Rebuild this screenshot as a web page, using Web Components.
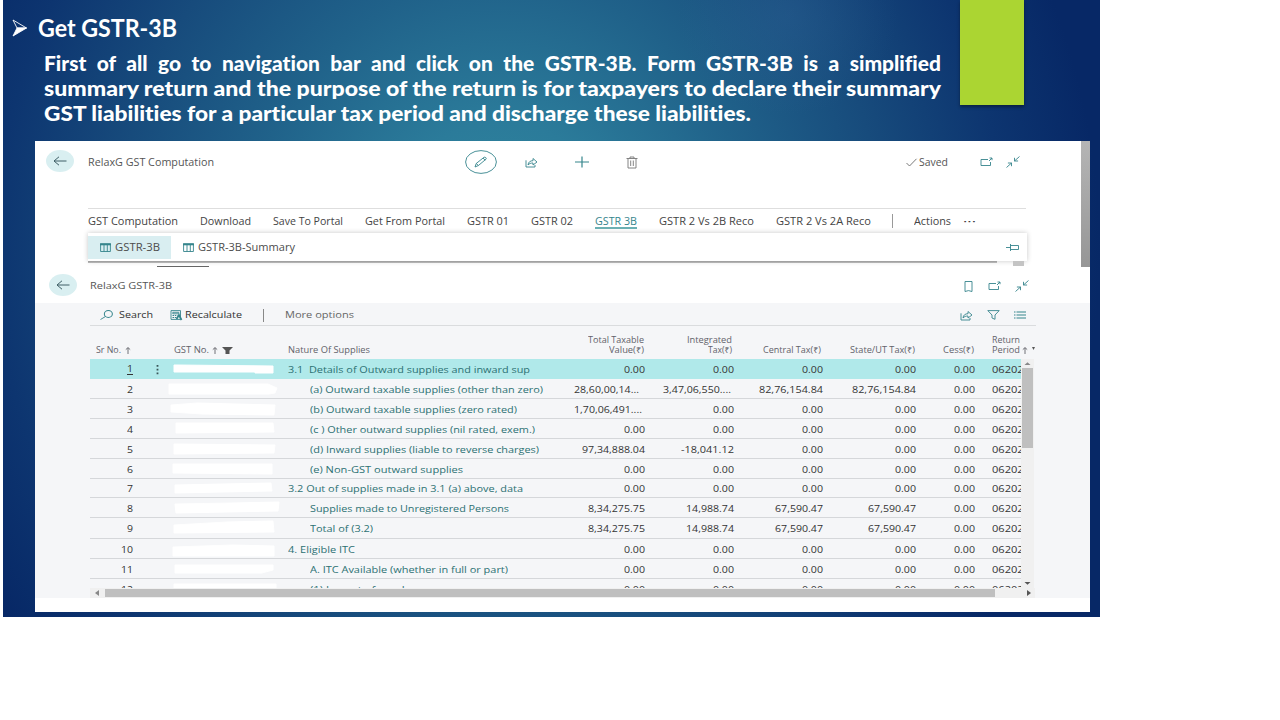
<!DOCTYPE html>
<html lang="en">
<head>
<meta charset="utf-8">
<title>Get GSTR-3B</title>
<style>
  body { margin: 0; background: #fff; font-family: "Open Sans", "Noto Sans", sans-serif; }
</style>
</head>
<body>
<help-slide>
  <slide-header slot="header"></slide-header>
  <computation-page></computation-page>
  <gstr-page></gstr-page>
</help-slide>

<script>
(function () {
  // Registers an element whose shadow root is cloned from the given markup
  function define(name, html, setup) {
    const template = document.createElement('template');
    template.innerHTML = html;
    window.customElements.define(name, class extends HTMLElement {
      constructor() {
        super();
        this.attachShadow({ mode: 'open' });
        this.shadowRoot.appendChild(template.content.cloneNode(true));
      }
      connectedCallback() {
        if (setup) setup(this, this.shadowRoot);
      }
    });
  }

  // <fit-text w="90">label</fit-text> stretches its label to w pixels
  define('fit-text', `
    <style>
      :host { display: inline-block; text-align: left; vertical-align: top; }
      span { display: block; width: max-content; white-space: pre; transform-origin: 0 50%; }
    </style>
    <span><slot></slot></span>
  `, (el, root) => {
    const w = Number(el.getAttribute('w'));
    const span = root.querySelector('span');
    el.style.width = w + 'px';
    span.style.transform = 'scaleX(' + w / span.getBoundingClientRect().width + ')';
  });

  const ICONS = {
    back: [28, 22, '<ellipse cx="14" cy="11" rx="14" ry="11" fill="#d9eff1" stroke="none"/><path stroke="#3f5f66" stroke-width="1" d="M20.5 11H8M13 6.8 8 11l5 4.2"/>'],
    edit: [32, 24, '<ellipse cx="16" cy="12" rx="15.4" ry="11.4"/><path d="M10 17l1.2-3.5L19 7.3c1-.7 3 .8 2 1.9l-7.6 6.3zM11.2 13.5l2.2 2M18 8.1l2.2 2"/>'],
    share: [13, 11, '<path d="M1 3.3V10h9V8M3 8c.3-3 2.3-4.3 5-4.3V1.5L12 5 8 8V6C5.8 6 4.2 6.6 3 8z"/>'],
    plus: [14, 12, '<path stroke-width="1.2" d="M0 6h14M7 .5v11"/>'],
    trash: [12, 13, '<path stroke="#777" d="M.5 2.5h11M4 2.5V1h4v1.5M2 2.5v9.5h8V2.5M4.7 4.5v5.5M7.3 4.5v5.5"/>'],
    check: [11, 9, '<path stroke="#6b6b6b" d="M.5 5l3 3L10.5.8"/>'],
    popout: [13, 10, '<path d="M8 2.5H1v6h9.5V5M9 4L12 1M9.5 1H12v2.2"/>'],
    collapse: [14, 12, '<path d="M13.5.5L8.5 5M8.5 1.8V5h3.6M.5 11.5L5.5 7M1.9 7h3.6v3.2"/>'],
    bookmark: [9, 11, '<path d="M1 .5h7v10L4.5 9.6 1 10.5z"/>'],
    table: [11, 9, '<path d="M.6 1h9.8v7.5H.6zM4 2v6.5M7.3 2v6.5"/><path stroke-width="2" d="M0 1.3h11"/>'],
    pin: [13, 9, '<path d="M0 4.5h4.5M4.5 1v7M4.5 2.5h8v4h-8"/>'],
    search: [13, 10, '<circle cx="8.3" cy="4" r="3.5" transform="matrix(1.15 0 0 1 -1.2 0)"/><path d="M5.5 6.5L.5 9.5"/>'],
    recalc: [12, 10, '<path d="M1 .6h9.5v8.8H1zM2.8 2.3h6v1.5h-6z"/><path stroke-width="1.2" stroke-dasharray="1.5 .8" d="M2.5 5.5h5M2.5 7.5h4"/><path stroke-width="1.8" d="M6.5 9l2.5-4 2.5 5"/>'],
    filter: [13, 10, '<path d="M.8.6h11.4L8 5v4.3L5 8V5z"/>'],
    filled: [11, 7, '<path fill="#555" stroke="none" d="M0 0h11L7.5 3.5V7h-4V3.5z"/>'],
    list: [12, 8, '<path stroke-width="1.2" d="M0 1h1.5M2.5 1h9.5M0 4h1.5M2.5 4h9.5M0 7h1.5M2.5 7h9.5"/>'],
    sort: [6, 7, '<path stroke="#62626a" d="M3 7V.8M.8 2.6L3 .6l2.2 2"/>'],
    more: [3, 11, '<path fill="#3a5558" stroke="none" d="M.6 1h1.8v1.8H.6zM.6 4.8h1.8v1.8H.6zM.6 8.5h1.8v1.8H.6z"/>'],
    bullet: [16, 18, '<path stroke="#fff" d="M1 1l13.5 8L5 9z"/><path fill="#fff" stroke="#fff" d="M14.5 9L1 17 5 9z"/>']
  };

  define('ui-icon', `
    <style>
      :host { display: inline-flex; }
      svg { display: block; fill: none; stroke: #35858c; stroke-width: .9; overflow: visible; }
    </style>
  `, (el, root) => {
    const [w, h, shapes] = ICONS[el.getAttribute('name')];
    root.innerHTML += `<svg width="${w}" height="${h}" viewBox="0 0 ${w} ${h}">${shapes}</svg>`;
  });

  define('help-slide', `
    <style>
      :host {
        display: flex; flex-direction: column; box-sizing: border-box;
        width: 1097px; height: 617px; margin-left: 3px; padding-right: 10px;
        background:
          radial-gradient(110px 100px at 785px 15px, rgba(50, 100, 155, .3), transparent),
          radial-gradient(600px 640px at 497px 250px, #31899f 0, #2b7b9a 20%, #20628a 42%, #174b7c 64%, #0d3570 84%, #072866 100%);
      }
      main { width: 1055px; height: 471px; margin-left: 32px; background: #fff; }
    </style>
    <slot name="header"></slot>
    <main><slot></slot></main>
  `);

  define('slide-header', `
    <style>
      :host { display: flex; height: 141px; flex: none; color: #fff; font-family: "Lato", sans-serif; font-weight: 900; font-variant-ligatures: none; }
      .copy { width: 957px; }
      h1 { display: flex; align-items: center; gap: 10px; margin: 13px 0 0 9px; font-size: 24px; line-height: 29px; }
      p { display: flex; flex-direction: column; margin: 8px 0 0 41px; font-size: 21px; line-height: 25px; }
      .tab { width: 64px; height: 105px; background: #abd532; box-shadow: 0 2px 3px rgba(0, 0, 0, .4); }
    </style>
    <div class="copy">
      <h1><ui-icon name="bullet"></ui-icon><fit-text w="139">Get GSTR-3B</fit-text></h1>
      <p>
        <fit-text w="897" style="word-spacing:5.5px">First of all go to navigation bar and click on the GSTR-3B. Form GSTR-3B is a simplified</fit-text>
        <fit-text w="897">summary return and the purpose of the return is for taxpayers to declare their summary</fit-text>
        <fit-text w="707">GST liabilities for a particular tax period and discharge these liabilities.</fit-text>
      </p>
    </div>
    <div class="tab"></div>
  `);

  define('computation-page', `
    <style>
      :host { display: flex; justify-content: space-between; height: 126px; font-size: 10px; line-height: 14px; color: #555; }
      .page { width: 1000px; }
      .title { display: grid; grid-template-columns: 11px 42px 377px 60px 50px 51px 280px 74px 26px auto; align-items: center; height: 42px; }
      .title > :first-child { grid-column: 2; margin-top: -2px; }
      .saved { display: flex; align-items: center; gap: 2px; }
      nav {
        display: grid; grid-template-columns: 112px 73px 92px 102px 64px 64px 64px 117px 116px 22px 49px auto;
        align-items: center; width: 938px; height: 24px; margin: 25px 0 0 53px; border-top: 1px solid #dedede; color: #444;
      }
      nav .on { color: #35858c; box-shadow: 0 1px #6bb0b3, 0 2px #6bb0b3; height: 12px; line-height: 12px; }
      .sep { width: 1px; height: 14px; background: #999; }
      .menu {
        display: flex; align-items: center; box-sizing: border-box; width: 939px; height: 28px; margin-left: 53px;
        padding-right: 8px; color: #4c4c4c; box-shadow: 0 0 5px rgba(0, 0, 0, .22);
      }
      .item { display: flex; align-items: center; gap: 4px; height: 23px; padding: 0 11px 0 12px; }
      .item.on { background: #d9eef1; }
      .menu > ui-icon { margin-left: auto; }
      .under { display: flex; justify-content: space-between; align-items: flex-start; width: 936px; height: 5px; margin-left: 53px; }
      .line { width: 909px; height: 2px; background: linear-gradient(#999, #bbb); }
      .thumb { width: 11px; height: 5px; background: #c4c4c4; }
      .stub { width: 52px; height: 1px; margin-left: 122px; background: #666; }
      .scroll { width: 9px; background: linear-gradient(#b5b5b5, #969696); }
    </style>
    <div class="page">
      <div class="title">
        <ui-icon name="back"></ui-icon>
        <fit-text w="126">RelaxG GST Computation</fit-text>
        <ui-icon name="edit"></ui-icon>
        <ui-icon name="share"></ui-icon>
        <ui-icon name="plus"></ui-icon>
        <ui-icon name="trash"></ui-icon>
        <div class="saved"><ui-icon name="check"></ui-icon><fit-text w="29">Saved</fit-text></div>
        <ui-icon name="popout"></ui-icon>
        <ui-icon name="collapse"></ui-icon>
      </div>
      <nav>
        <fit-text w="90">GST Computation</fit-text>
        <fit-text w="51">Download</fit-text>
        <fit-text w="70">Save To Portal</fit-text>
        <fit-text w="80">Get From Portal</fit-text>
        <fit-text w="42">GSTR 01</fit-text>
        <fit-text w="42">GSTR 02</fit-text>
        <fit-text w="42" class="on">GSTR 3B</fit-text>
        <fit-text w="95">GSTR 2 Vs 2B Reco</fit-text>
        <fit-text w="95">GSTR 2 Vs 2A Reco</fit-text>
        <span class="sep"></span>
        <fit-text w="37">Actions</fit-text>
        <fit-text w="13">···</fit-text>
      </nav>
      <div class="menu">
        <div class="item on"><ui-icon name="table"></ui-icon><fit-text w="45">GSTR-3B</fit-text></div>
        <div class="item"><ui-icon name="table"></ui-icon><fit-text w="97">GSTR-3B-Summary</fit-text></div>
        <ui-icon name="pin"></ui-icon>
      </div>
      <div class="under"><div class="line"></div><div class="thumb"></div></div>
      <div class="stub"></div>
    </div>
    <div class="scroll"></div>
  `);

  define('gstr-page', `
    <style>
      :host { display: block; font-size: 9.5px; line-height: 12px; color: #555; }
      .title { display: grid; grid-template-columns: 14px 41px 874px 24px 27px auto; align-items: center; height: 36px; }
      .title > :nth-child(n+2) { margin-top: 2px; }
      .title > :first-child { grid-column: 2; margin-top: -1px; }
      .body { height: 295px; padding-left: 55px; background: #f5f6f8; }
      .tools {
        display: grid; grid-template-columns: 10px 19px 51px 15px 78px 22px 675px 27px 27px auto; align-items: center;
        box-sizing: border-box; width: 946px; height: 23px; padding-top: 2px; border-bottom: 1px solid #dadcde; color: #333;
      }
      .tools > :first-child { grid-column: 2; }
      .sep { width: 1px; height: 13px; background: #888; }
    </style>
    <div class="title">
      <ui-icon name="back"></ui-icon>
      <fit-text w="82">RelaxG GSTR-3B</fit-text>
      <ui-icon name="bookmark"></ui-icon>
      <ui-icon name="popout"></ui-icon>
      <ui-icon name="collapse"></ui-icon>
    </div>
    <div class="body">
      <div class="tools">
        <ui-icon name="search"></ui-icon>
        <fit-text w="34">Search</fit-text>
        <ui-icon name="recalc"></ui-icon>
        <fit-text w="57">Recalculate</fit-text>
        <span class="sep"></span>
        <fit-text w="69" style="color:#666">More options</fit-text>
        <ui-icon name="share"></ui-icon>
        <ui-icon name="filter"></ui-icon>
        <ui-icon name="list"></ui-icon>
      </div>
      <supplies-table></supplies-table>
    </div>
  `);

  // label, label width, indented, row height, amounts, outline of the blank GST number
  const ZERO = ['0.00', '0.00', '0.00', '0.00'];
  const ROWS = [
    ['3.1  Details of Outward supplies and inward sup', 242, 0, 20, ZERO, '2 6,5 6,101 7,101 14,83 14,83 13,2 13'],
    ['(a) Outward taxable supplies (other than zero)', 233, 1, 20, ['28,60,00,14...', '3,47,06,550....', '82,76,154.84', '82,76,154.84'], '-3 5,96 5,105 9,103 14,97 15,-3 15'],
    ['(b) Outward taxable supplies (zero rated)', 207, 1, 20, ['1,70,06,491....', '0.00', '0.00', '0.00'], '-1 6,25 4,103 6,102 16,30 15,-1 13'],
    ['(c ) Other outward supplies (nil rated, exem.)', 225, 1, 20, ZERO, '4 4,101 4,102 13,4 14'],
    ['(d) Inward supplies (liable to reverse charges)', 229, 1, 20, ['97,34,888.04', '-18,041.12', '0.00', '0.00'], '2 5,103 6,102 14,2 15'],
    ['(e) Non-GST outward supplies', 153, 1, 20, ZERO, '1 5,100 5,100 15,1 14'],
    ['3.2 Out of supplies made in 3.1 (a) above, data', 235, 0, 19, ZERO, '3 6,99 4,100 12,3 14'],
    ['Supplies made to Unregistered Persons', 199, 1, 20, ['8,34,275.75', '14,988.74', '67,590.47', '67,590.47'], '3 6,60 5,107 4,106 13,4 15'],
    ['Total of (3.2)', 63, 1, 21, ['8,34,275.75', '14,988.74', '67,590.47', '67,590.47'], '2 7,55 4,101 3,102 14,2 15'],
    ['4. Eligible ITC', 67, 0, 20, ZERO, '1 8,60 6,102 7,102 17,1 17'],
    ['A. ITC Available (whether in full or part)', 198, 1, 20, ZERO, '3 6,101 6,101 11,90 14,3 14'],
    ['(1) Import of goods', 100, 1, 20, ZERO, '2 5,104 5,104 20,2 20']
  ];
  const WIDTHS = {
    '0.00': 21, '28,60,00,14...': 65, '3,47,06,550....': 68, '1,70,06,491....': 68, '82,76,154.84': 64,
    '97,34,888.04': 63, '-18,041.12': 53, '8,34,275.75': 57, '14,988.74': 48, '67,590.47': 48
  };

  define('supplies-table', `
    <style>
      :host { display: block; width: 945px; }
      .head, .row { display: grid; grid-template-columns: 43px 39px 116px 272px 85px 89px 89px 93px 59px 17px 29px; }
      .head { grid-template-columns: 6px 78px 114px 272px 84px 88px 89px 94px 59px 18px auto; height: 29px; padding-bottom: 4px; align-items: end; font-size: 8.5px; line-height: 10px; color: #62626a; }
      .head .end { display: flex; flex-direction: column; align-items: flex-end; }
      .head .inline { display: flex; align-items: center; }
      .frame { display: flex; }
      .rows { width: 931px; height: 229px; overflow: hidden; color: #333; }
      .row { box-sizing: border-box; align-items: center; padding-top: 2px; border-bottom: 1px solid #d5d7da; }
      .row.on { background: #b0e9ea; border-color: #b0e9ea; }
      .num, .amount { text-align: right; }
      .on .num fit-text { height: 10px; line-height: 10px; border-bottom: 1px solid #333; }
      .dots { display: flex; padding-left: 23px; }
      .blank { display: block; overflow: visible; align-self: start; margin-top: -2px; }
      .nature { color: #2c7173; }
      .indent { padding-left: 22px; }
      .period { width: 29px; overflow: hidden; }
      .bar { display: flex; align-items: center; background: #f0f0f0; }
      .bar.v { flex-direction: column; width: 13px; height: 229px; }
      .bar.h { height: 10px; }
      .bar svg { flex: none; fill: #555; }
      .bar i { background: #bfbfbf; }
      .v i { width: 11px; height: 80px; margin-bottom: auto; }
      .h i { width: 890px; height: 8px; margin-right: auto; }
    </style>
    <div class="head">
      <div></div>
      <div class="inline"><fit-text w="25">Sr No.</fit-text><ui-icon name="sort" style="margin-left:4px"></ui-icon></div>
      <div class="inline"><fit-text w="35">GST No.</fit-text><ui-icon name="sort" style="margin:0 4px 0 3px"></ui-icon><ui-icon name="filled"></ui-icon></div>
      <fit-text w="82">Nature Of Supplies</fit-text>
      <div class="end"><fit-text w="56">Total Taxable</fit-text><fit-text w="35">Value(₹)</fit-text></div>
      <div class="end"><fit-text w="45">Integrated</fit-text><fit-text w="24">Tax(₹)</fit-text></div>
      <div class="end"><fit-text w="58">Central Tax(₹)</fit-text></div>
      <div class="end"><fit-text w="65">State/UT Tax(₹)</fit-text></div>
      <div class="end"><fit-text w="31">Cess(₹)</fit-text></div>
      <div></div>
      <div><fit-text w="28">Return</fit-text><div class="inline"><fit-text w="28">Period</fit-text><ui-icon name="sort" style="margin:0 4px 0 2px"></ui-icon><svg width="3" height="7"><path d="M0 0h3L1.5 3z" fill="#555"/></svg></div></div>
    </div>
    <div class="frame">
      <div class="rows"></div>
      <div class="bar v">
        <svg width="13" height="9"><path d="M3.5 6h6L6.5 3.2z" fill="#888"/></svg><i></i>
        <svg width="13" height="9"><path d="M3.5 3h6L6.5 5.8z"/></svg>
      </div>
    </div>
    <div class="bar h">
      <svg width="15" height="10"><path d="M9 2v6L5 5z" fill="#888"/></svg><i></i>
      <svg width="12" height="10"><path d="M4 2v6l4-3z"/></svg>
    </div>
  `, (el, root) => {
    root.querySelector('.rows').innerHTML = ROWS.map(([label, width, indent, height, amounts, blank], i) => `
      <div class="row ${i === 0 ? 'on' : ''}" style="height:${height}px">
        <div class="num"><fit-text w="${i < 9 ? 6 : 12}">${i + 1}</fit-text></div>
        <div class="dots">${i === 0 ? '<ui-icon name="more"></ui-icon>' : ''}</div>
        <svg class="blank" width="110" height="18"><polygon fill="#fff" stroke="#fff" stroke-linejoin="round" points="${blank}"/></svg>
        <div class="nature ${indent ? 'indent' : ''}"><fit-text w="${width}">${label}</fit-text></div>
        ${amounts.concat('0.00').map(a => `<div class="amount" ${a.endsWith('..') ? 'style="padding-right:' + (a.startsWith('2') ? 6 : 3) + 'px"' : ''}><fit-text w="${WIDTHS[a]}">${a}</fit-text></div>`).join('')}
        <div></div>
        <div class="period"><fit-text w="38">062023</fit-text></div>
      </div>`).join('');
  });
})();
</script>
</body>
</html>
